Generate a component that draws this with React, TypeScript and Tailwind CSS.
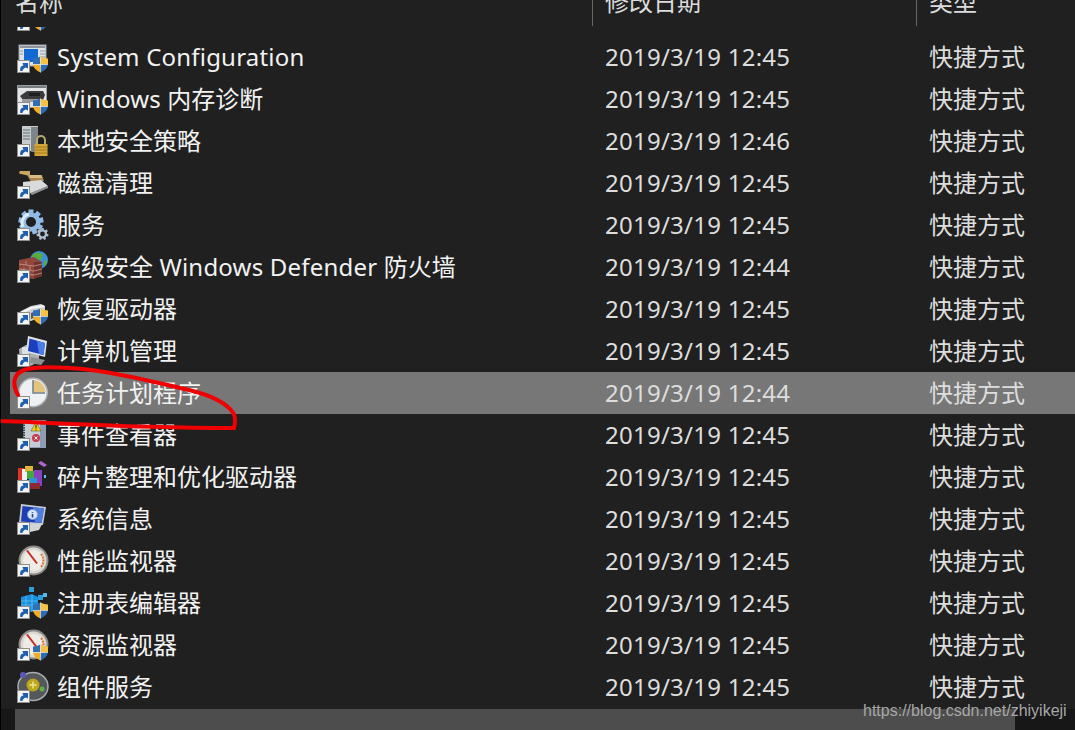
import React from "react";

const Shortcut = () => (
  <g>
    <rect x="0.5" y="19.5" width="12" height="12" fill="#f3f3f3" stroke="#8f8f8f" />
    <path d="M3.2 30 C2.8 26.6 3.9 25 6.4 24.6 L5.4 22 H11 V27.6 L8.8 26.4 C7 27 6 28 5.4 30 Z" fill="#1f5fb0" />
  </g>
);

const Shield = () => (
  <g transform="translate(16 15.5)">
    <path d="M0 2 Q4 2 7.5 0 V8 H0Z" fill="#2f6fb5" />
    <path d="M7.5 0 Q11 2 15 2 V8 H7.5Z" fill="#f7c23e" />
    <path d="M0 8 H7.5 V16 Q1 13.5 0 8Z" fill="#f4ad22" />
    <path d="M7.5 8 H15 Q14 13.5 7.5 16Z" fill="#2c6cb3" />
    <path d="M7.5 0 V16 M0 8 H15" stroke="#e9eef5" strokeWidth="0.7" />
  </g>
);

const Svg = ({ children }: { children?: React.ReactNode }) => (
  <svg width="32" height="32" viewBox="0 0 32 32" className="shrink-0">
    {children}
  </svg>
);

const Gear = ({ cx, cy, r, fill, teeth }: { cx: number; cy: number; r: number; fill: string; teeth: number }) => (
  <g>
    {Array.from({ length: teeth }, (_, i) => (
      <rect
        key={i}
        x={cx - r * 0.2}
        y={cy - r}
        width={r * 0.4}
        height={r * 0.5}
        fill={fill}
        transform={`rotate(${(360 / teeth) * i} ${cx} ${cy})`}
      />
    ))}
    <circle cx={cx} cy={cy} r={r * 0.58} fill="none" stroke={fill} strokeWidth={r * 0.36} />
  </g>
);

const Gauge = () => (
  <g>
    <circle cx="16.5" cy="15.5" r="15" fill="#8f8c88" />
    <circle cx="16.5" cy="15.5" r="13" fill="#dcd9d4" />
    <circle cx="16.5" cy="15.5" r="10.5" fill="#efece8" />
    <path d="M24 9 A10 10 0 0 1 24 22" fill="none" stroke="#d9742b" strokeWidth="2" strokeDasharray="2 1" />
    <path d="M10 5.5 L20 18.5" stroke="#c22a22" strokeWidth="2" />
  </g>
);

const icons: Record<string, React.ReactNode> = {
  sys: (
    <>
      <rect x="2" y="4" width="27" height="21" fill="#dfe3e8" stroke="#9aa0a6" />
      <rect x="3" y="5" width="25" height="2" fill="#8f959c" />
      <rect x="7" y="8" width="14" height="13" fill="#1269d3" />
      <path d="M23 10 H28 M23 13 H28 M23 16 H28 M3 10 H6 M3 13 H6" stroke="#8f959c" />
      <Shortcut />
      <Shield />
    </>
  ),
  mem: (
    <>
      <rect x="0.5" y="2.5" width="29" height="22" fill="#e2e4e6" stroke="#9a9ea2" />
      <rect x="1" y="3" width="28" height="2" fill="#777c80" />
      <path d="M3 13 L10 8 H26 L28 12 L26 17 H6Z" fill="#3a3a3c" />
      <path d="M5 16 H25 V19 H5Z" fill="#9a9a9a" />
      <path d="M12 10 H23 V13 H12Z" fill="#1e1e1e" />
      <Shortcut />
      <Shield />
    </>
  ),
  sec: (
    <>
      <path d="M5 1 H21 V26 H5Z" fill="#c6ccd0" />
      <path d="M14 2 H21 V27 H14Z" fill="#7c868a" />
      <path d="M6 5 H13 M6 8 H13 M6 11 H13 M6 14 H13" stroke="#5d6a70" strokeWidth="1.2" />
      <path d="M20 19 V15 A4 4 0 0 1 28 15 V19" fill="none" stroke="#b9a870" strokeWidth="2" />
      <rect x="17.5" y="19" width="13" height="12" fill="#d4a637" />
      <path d="M17.5 22 H30.5 M17.5 25 H30.5 M17.5 28 H30.5" stroke="#9f7a1e" />
      <Shortcut />
    </>
  ),
  disk: (
    <>
      <path d="M3 4 C1.5 5 2 7 4 7 L13 9 V4 Z" fill="#c9a465" />
      <path d="M10 8 H25 L27 14 L14 15 Z" fill="#a8864e" />
      <path d="M12 8 H24 L25 11 H13Z" fill="#d8bd84" />
      <path d="M6 15 L24 13 L31 19 L15 26 H6Z" fill="#d9dadb" />
      <path d="M13 26 L31 19 V21 L15 28Z" fill="#8f9193" />
      <Shortcut />
    </>
  ),
  svc: (
    <>
      <Gear cx={14} cy={13} r={12.5} fill="#8fbbe6" teeth={9} />
      <path d="M6 18 A9 9 0 0 1 12 5" fill="none" stroke="#dcebf8" strokeWidth="3" />
      <Gear cx={25.5} cy={25} r={6} fill="#aebfce" teeth={7} />
      <Shortcut />
    </>
  ),
  fw: (
    <>
      <circle cx="22" cy="9" r="9" fill="#3a8fd6" />
      <path d="M15 5 C18 1 24 1 26 4 L24 9 L19 8 L20 13 L17 14 Z" fill="#58ad3c" />
      <path d="M27 10 L30 9 L29 14 L27 15Z" fill="#58ad3c" />
      <path d="M2 9 L17 6 L25 11 V25 L16 28 L2 25Z" fill="#92473d" />
      <path d="M17 11 L25 11 V25 L17 28Z" fill="#6e332c" />
      <path d="M2 13 L17 15 L25 13 M2 18 L17 20 L25 18 M2 22 L17 24 L25 22 M9 10 V14 M13 15 V20 M7 17 V22" stroke="#c9988c" strokeWidth="0.8" fill="none" />
      <Shortcut />
    </>
  ),
  rec: (
    <>
      <path d="M1 21 L4 18 L14 13 L24 11 L28 13 V22 L14 28 L1 27Z" fill="#cfd2d4" />
      <path d="M2 21 L14 15 L27 13" stroke="#f5f5f5" strokeWidth="2" fill="none" />
      <path d="M14 20 L22 17 V23 L14 26Z" fill="#55585b" />
      <Shortcut />
      <Shield />
    </>
  ),
  comp: (
    <>
      <path d="M2 14 L9 10 H22 V27 L13 31 H3Z" fill="#aeb2b5" />
      <path d="M5 12 H12 V20 H5Z" fill="#dde0e2" />
      <path d="M11 1 L30 6 L28 22 L9 17Z" fill="#e1e4e8" />
      <path d="M12.5 3.5 L28 8 L26.5 20 L11 16Z" fill="#1b3fc0" />
      <path d="M20 6 L28 8 L26.5 20 L22 19Z" fill="#4b7de8" />
      <path d="M14 22 L28 25 L24 30 L13 28Z" fill="#8c9093" />
      <Shortcut />
    </>
  ),
  clock: (
    <>
      <circle cx="16" cy="15.5" r="15" fill="#aeb2b6" />
      <circle cx="16" cy="15.5" r="13.5" fill="#eef1f4" />
      <path d="M16 15.5 V3 A12.5 12.5 0 0 1 28.5 15.5Z" fill="#e3c37e" />
      <path d="M16 3 V16 H28" stroke="#6f7f90" strokeWidth="1.5" fill="none" />
      <Shortcut />
    </>
  ),
  evt: (
    <>
      <rect x="6" y="1" width="23" height="28" fill="#8e9cb6" />
      <rect x="7" y="2" width="16" height="26" fill="#c6ccd6" />
      <path d="M7 3 V27" stroke="#444" strokeWidth="2" strokeDasharray="1.5 1" />
      <path d="M19 3 L24 12 H14Z" fill="#f5d31d" stroke="#55500f" strokeWidth="0.5" />
      <path d="M19 6 V9.5 M19 10.5 V11.5" stroke="#222" strokeWidth="1" />
      <circle cx="19" cy="19" r="4" fill="#c8394a" />
      <path d="M17.5 17.5 L20.5 20.5 M20.5 17.5 L17.5 20.5" stroke="#fff" />
      <Shortcut />
    </>
  ),
  defrag: (
    <>
      <path d="M21 2 L24 0 L30 4 L27 6Z" fill="#b168c8" />
      <rect x="1" y="7" width="6" height="14" fill="#d8352c" />
      <rect x="5" y="8" width="5" height="12" fill="#f1f1f1" />
      <rect x="8" y="5" width="8" height="6" fill="#e0b53a" />
      <rect x="10" y="10" width="8" height="8" fill="#46a742" />
      <rect x="17" y="9" width="8" height="16" fill="#8a3fc0" />
      <rect x="12" y="17" width="8" height="6" fill="#2b96d6" />
      <rect x="10" y="22" width="13" height="6" fill="#8b2a33" />
      <rect x="27" y="14" width="2" height="3" fill="#5bc2ea" />
      <Shortcut />
    </>
  ),
  info: (
    <>
      <path d="M4 1 L29 4 L26 22 L2 20Z" fill="#c7ccd4" />
      <path d="M5.5 3 L27 5.5 L24.5 20 L4 18.5Z" fill="#1e3fb4" />
      <path d="M16 4 L27 5.5 L24.5 20 L18 19.5Z" fill="#4f7fdd" />
      <circle cx="15.5" cy="11.5" r="5" fill="#dbe6f7" stroke="#7fa0dd" />
      <path d="M15.5 9 V9.8 M15.5 11 V14.5" stroke="#1c3ea5" strokeWidth="1.6" />
      <path d="M12 21 H25 L22 27 L13 29Z" fill="#d2d5d7" />
      <Shortcut />
    </>
  ),
  perf: (
    <>
      <Gauge />
      <Shortcut />
    </>
  ),
  reg: (
    <>
      <rect x="12" y="0" width="5" height="5" fill="#2b9fdc" />
      <rect x="21" y="8" width="5" height="5" fill="#2b9fdc" />
      <rect x="26" y="6" width="4" height="4" fill="#57b8e6" />
      <path d="M4 10 L15 7 L21 10 V21 L15 25 L4 22Z" fill="#1b8fdc" />
      <path d="M4 14 L21 14 M4 18 L21 18 M9 9 V24 M15 8 V25" stroke="#5cc0f0" strokeWidth="0.8" />
      <Shortcut />
      <Shield />
    </>
  ),
  res: (
    <>
      <Gauge />
      <Shortcut />
      <Shield />
    </>
  ),
  com: (
    <>
      <ellipse cx="16" cy="15.5" rx="15" ry="14" fill="#55585a" />
      <ellipse cx="16" cy="15.5" rx="15" ry="14" fill="none" stroke="#a9acae" strokeWidth="1.5" />
      <circle cx="6" cy="4" r="3" fill="#5b57b5" />
      <circle cx="16" cy="14" r="6.5" fill="#bda71e" />
      <path d="M12.5 14 H19.5 M16 10.5 V17.5" stroke="#f0e48c" strokeWidth="1.5" />
      <circle cx="25" cy="18" r="2.5" fill="#5fb04a" />
      <Shortcut />
    </>
  ),
};

const rows = [
  ["sys", "System Configuration", "2019/3/19 12:45"],
  ["mem", "Windows 内存诊断", "2019/3/19 12:45"],
  ["sec", "本地安全策略", "2019/3/19 12:46"],
  ["disk", "磁盘清理", "2019/3/19 12:45"],
  ["svc", "服务", "2019/3/19 12:45"],
  ["fw", "高级安全 Windows Defender 防火墙", "2019/3/19 12:44"],
  ["rec", "恢复驱动器", "2019/3/19 12:45"],
  ["comp", "计算机管理", "2019/3/19 12:45"],
  ["clock", "任务计划程序", "2019/3/19 12:44"],
  ["evt", "事件查看器", "2019/3/19 12:45"],
  ["defrag", "碎片整理和优化驱动器", "2019/3/19 12:45"],
  ["info", "系统信息", "2019/3/19 12:45"],
  ["perf", "性能监视器", "2019/3/19 12:45"],
  ["reg", "注册表编辑器", "2019/3/19 12:45"],
  ["res", "资源监视器", "2019/3/19 12:45"],
  ["com", "组件服务", "2019/3/19 12:45"],
];

const Name = ({ text }: { text: string }) => (
  <span className="whitespace-pre text-[#f2f2f2]">
    {text.split(/([A-Za-z][A-Za-z ]*[A-Za-z]| )/).map((part, i) =>
      /[A-Za-z ]/.test(part) ? (
        <span key={i} className="tracking-[0.2px]">
          {part}
        </span>
      ) : (
        <span key={i}>{part}</span>
      ),
    )}
  </span>
);

const Row = ({ icon, name, date, active }: { icon: string; name: string; date: string; active?: boolean }) => (
  <div className={`ml-[9px] flex h-[42px] shrink-0 items-center ${active ? "bg-[#777777]" : ""}`}>
    <div className="flex w-[595px] shrink-0 items-center gap-2 pl-[7px]">
      <Svg>{icons[icon]}</Svg>
      <Name text={name} />
    </div>
    <span className="w-[324px] shrink-0 text-[#dddddd] tracking-[0.25px]">{date}</span>
    <span className="text-[#dddddd]">快捷方式</span>
  </div>
);

export default function App() {
  return (
    <div
      className="relative flex h-[730px] w-[1075px] flex-col overflow-hidden border-l border-black bg-[#202020] text-[24px] leading-[42px]"
      style={{ fontFamily: '"Noto Sans", "Noto Sans CJK SC", sans-serif' }}
    >
      <div className="flex h-[27px] shrink-0 overflow-hidden text-[#dcdcdc]">
        <div className="w-[591px] shrink-0 pl-[14px] leading-[24px] -mt-[10px]">名称</div>
        <div className="h-[26px] w-[324px] shrink-0 border-l border-[#666666] pl-[12px] leading-[24px]">
          <div className="-mt-[10px]">修改日期</div>
        </div>
        <div className="h-[26px] flex-1 border-l border-[#666666] pl-[12px] leading-[24px]">
          <div className="-mt-[10px]">类型</div>
        </div>
      </div>

      <div className="flex h-[9px] shrink-0 flex-col justify-end overflow-hidden">
        <Row icon="sys" name="ODBC 数据源" date="2019/3/19 12:45" />
      </div>

      <div className="flex flex-1 flex-col">
        {rows.map(([icon, name, date]) => (
          <Row key={name} icon={icon} name={name} date={date} active={icon === "clock"} />
        ))}
      </div>

      <div className="flex h-[21px] shrink-0 bg-[#171717]">
        <div className="w-[14px] shrink-0" />
        <div className="w-[1000px] bg-[#4d4d4d]" />
      </div>

      <svg className="pointer-events-none absolute -left-px top-0" width="1075" height="730" viewBox="0 0 1075 730" fill="none">
        <path
          d="M0 421 C60 423 130 428 234 428 C236 420 235 414 231 410 C222 400 205 393 180 388 C150 381 120 373 83 369 C60 367 35 366 24 370 C13 374 12 385 18 395"
          stroke="#f00000"
          strokeWidth="4"
          strokeLinecap="round"
        />
      </svg>

      <div
        className="absolute left-[862px] top-[700px] text-[16px] leading-[22px] text-[#a8a8a8]"
        style={{ fontFamily: '"Liberation Sans", sans-serif' }}
      >
        https://blog.csdn.net/zhiyikeji
      </div>
    </div>
  );
}
